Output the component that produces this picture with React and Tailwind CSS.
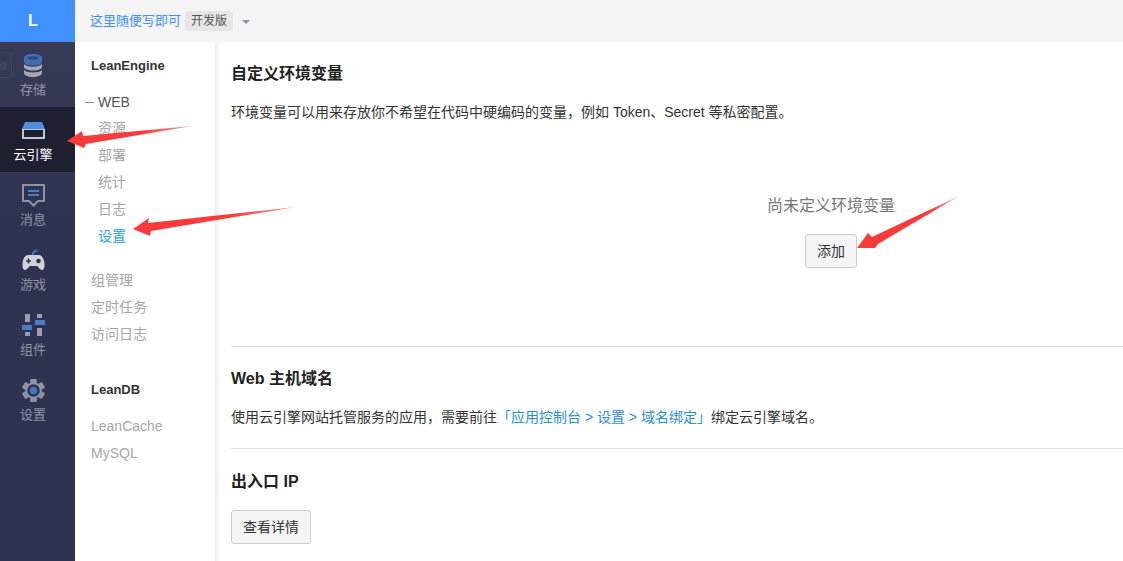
const FONT = "font-['Liberation_Sans','Noto_Sans_CJK_SC',sans-serif]";

const StorageIcon = () => (
  <svg width="18" height="23" viewBox="0 0 18 23">
    <path d="M0 4c0-2.500 4-4 9-4s9 1.500 9 4v3.500c0 2.500-4 4-9 4s-9-1.500-9-4z" fill="#3f6fb0" />
    <ellipse cx="9" cy="4" rx="5.500" ry="1.800" fill="#2a4a80" />
    <path d="M0 10c2 1.800 5 2.800 9 2.800s7-1 9-2.800v3c0 2-4 3.500-9 3.500S0 15 0 13z" fill="#a5a7b8" />
    <path d="M0 16c2 1.800 5 2.500 9 2.500s7-.7 9-2.500v3c0 2.200-4 4-9 4s-9-1.800-9-4z" fill="#a5a7b8" />
  </svg>
);

const EngineIcon = () => (
  <svg width="23" height="17" viewBox="0 0 23 17">
    <path d="M3 0h17l3 7H0z" fill="#4a90e2" />
    <path d="M0 7h23v10H0z" fill="#c4c5d2" />
    <rect x="2" y="8" width="19" height="7" fill="#1e2032" />
  </svg>
);

const MessageIcon = () => (
  <svg width="23" height="23" viewBox="0 0 23 23">
    <path d="M1 1h21v16h-6l-4.500 4.500L7 17H1z" fill="none" stroke="#8f92a6" strokeWidth="2" />
    <rect x="6" y="6" width="11" height="2" fill="#4a7dc4" />
    <rect x="6" y="10" width="11" height="2" fill="#4a7dc4" />
  </svg>
);

const GameIcon = () => (
  <svg width="23" height="22" viewBox="0 0 23 22">
    <path d="M10.500 7c0-3.500 1.500-5.500 5-5.500" fill="none" stroke="#3f78c4" strokeWidth="2" />
    <path d="M6 6h11c3 0 5 4 5.500 8.500.4 4-.8 6.500-2.500 6.500-2 0-3.500-3-5-4H8c-1.500 1-3 4-5 4-1.700 0-2.900-2.500-2.500-6.500C1 10 3 6 6 6z" fill="#d0d1da" />
    <path d="M4 12h5M6.500 9.500v5" stroke="#2f3250" strokeWidth="1.500" />
    <circle cx="16.500" cy="12" r="2.300" fill="#2f3250" />
  </svg>
);

const ComponentIcon = () => (
  <svg width="23" height="22" viewBox="0 0 23 22">
    <rect x="3" y="0" width="5" height="8" fill="#9a9cb0" />
    <rect x="15" y="0" width="5" height="4" fill="#9a9cb0" />
    <rect x="13" y="6" width="10" height="5" fill="#4a7dc4" />
    <rect x="0" y="11" width="10" height="5" fill="#4a7dc4" />
    <rect x="3" y="18" width="5" height="4" fill="#9a9cb0" />
    <rect x="15" y="14" width="5" height="8" fill="#9a9cb0" />
  </svg>
);

const GearIcon = () => (
  <svg width="23" height="23" viewBox="0 0 24 24">
    <g fill="#8f92a6">
      {[0, 60, 120].map((a) => (
        <rect key={a} x="8.500" y="0" width="7" height="24" rx="1" transform={`rotate(${a} 12 12)`} />
      ))}
    </g>
    <circle cx="12" cy="12" r="8.500" fill="#8f92a6" />
    <circle cx="12" cy="12" r="6.500" fill="#2f3250" />
    <circle cx="12" cy="12" r="3.800" fill="#3f78c4" />
  </svg>
);

const navItems = [
  { label: '存储', icon: <StorageIcon /> },
  { label: '云引擎', icon: <EngineIcon />, active: true },
  { label: '消息', icon: <MessageIcon /> },
  { label: '游戏', icon: <GameIcon /> },
  { label: '组件', icon: <ComponentIcon /> },
  { label: '设置', icon: <GearIcon /> },
];

const SubLink = ({ children, active }) => (
  <div className={`h-[27px] leading-[27px] text-sm ${active ? 'text-[#2a9df4]' : 'text-[#a6a6a6]'}`}>{children}</div>
);

// the red annotation arrows drawn on top of the screenshot
const Arrows = () => (
  <svg className="absolute left-0 top-0 pointer-events-none" width="1123" height="561" viewBox="0 0 1123 561">
    <defs>
      <linearGradient id="a1" x1="0" x2="1" y1="0" y2="0">
        <stop offset="0.6" stopColor="#f93a3a" />
        <stop offset="1" stopColor="#ff9a9a" />
      </linearGradient>
      <linearGradient id="a3" x1="0" x2="1" y1="1" y2="0">
        <stop offset="0.7" stopColor="#f93a3a" />
        <stop offset="1" stopColor="#ffb0b0" />
      </linearGradient>
    </defs>
    <path d="M67 141 L82 131 L83 136 L192 126 L86 144 L84 148 Z" fill="url(#a1)" />
    <path d="M133 229 L149 218 L148 223 L296 207 L151 231 L150 236 Z" fill="url(#a1)" />
    <path d="M857 248 L868 233 L872 237 L959 196 L878 244 L875 248 Z" fill="url(#a3)" />
  </svg>
);

export default function App() {
  return (
    <div className={`relative flex w-[1123px] h-[561px] overflow-hidden bg-white ${FONT}`}>
      {/* left icon bar */}
      <aside className="relative w-[75px] shrink-0 flex flex-col bg-gradient-to-b from-[#3a3d58] to-[#2f3250] to-40%">
        <div className="h-[42px] flex items-center justify-center pr-[9px] bg-[#4090ff] text-white font-bold text-base">L</div>
        {navItems.map((item) => (
          <div
            key={item.label}
            className={`h-[65px] flex flex-col items-center pt-[10px] pr-[9px] ${item.active ? 'bg-[#1e2032] text-white' : 'text-[#9093a3]'}`}
          >
            <div className="h-[26px] flex items-center justify-center">{item.icon}</div>
            <div className="mt-[2px] text-[13px] leading-[20px]">{item.label}</div>
          </div>
        ))}
        {/* faint leftover box in the screenshot */}
        <div className="absolute left-0 top-[52px] w-[12px] h-[26px] rounded-r-[3px] border border-l-0 border-[#3f4260]">
          <div className="mt-[9px] w-[7px] h-[8px] bg-[#3f4260]" />
        </div>
      </aside>

      <div className="flex-1 flex flex-col min-w-0">
        {/* top bar */}
        <header className="h-[42px] shrink-0 flex items-center bg-[#f4f4f4] pl-[15px]">
          <span className="text-[13px] text-[#3f8fff]">这里随便写即可</span>
          <span className="ml-[4px] h-[20px] px-[6px] leading-[20px] rounded-[4px] bg-[#e6e6e6] text-xs text-[#555]">开发版</span>
          <span className="ml-[9px] mt-[2px] w-0 h-0 border-x-[4px] border-x-transparent border-t-[4px] border-t-[#8f92a6]" />
        </header>

        <div className="flex-1 flex min-h-0">
          {/* second level menu */}
          <nav className="w-[140px] shrink-0 bg-white pl-[16px]">
            <div className="mt-[14px] h-[20px] leading-[20px] text-[13px] font-bold text-[#333]">LeanEngine</div>
            <div className="mt-[13px] h-[26px] leading-[27px] text-sm text-[#555] flex items-center -ml-[6px]">
              <span className="w-[9px] h-px bg-[#888] mr-[4px]" />WEB
            </div>
            <div className="pl-[7px]">
              <SubLink>资源</SubLink>
              <SubLink>部署</SubLink>
              <SubLink>统计</SubLink>
              <SubLink>日志</SubLink>
              <SubLink active>设置</SubLink>
            </div>
            <div className="mt-[17px]">
              <SubLink>组管理</SubLink>
              <SubLink>定时任务</SubLink>
              <SubLink>访问日志</SubLink>
            </div>
            <div className="mt-[32px] h-[20px] leading-[20px] text-[13px] font-bold text-[#333]">LeanDB</div>
            <div className="mt-[13px]">
              <SubLink>LeanCache</SubLink>
              <SubLink>MySQL</SubLink>
            </div>
          </nav>
          <div className="w-[6px] shrink-0 bg-gradient-to-r from-[#ececec] to-white" />

          {/* main content */}
          <main className="flex-1 min-w-0 pl-[10px] text-[#333]">
            <h2 className="mt-[21px] h-[22px] leading-[22px] text-base font-bold text-[#222]">自定义环境变量</h2>
            <p className="mt-[17px] h-[20px] leading-[20px] text-sm whitespace-nowrap">环境变量可以用来存放你不希望在代码中硬编码的变量，例如 Token、Secret 等私密配置。</p>

            <div className="mt-[72px] w-[1200px] h-[153px] flex flex-col items-center border-b border-[#ddd]">
              <div className="h-[24px] leading-[24px] text-base text-[#777]">尚未定义环境变量</div>
              <button className="mt-[16px] w-[52px] h-[34px] rounded-[3px] border border-[#ccc] bg-[#f5f5f5] text-sm text-[#333]">添加</button>
            </div>

            <h2 className="mt-[21px] h-[22px] leading-[22px] text-base font-bold text-[#222]">Web 主机域名</h2>
            <p className="mt-[17px] h-[20px] leading-[20px] text-sm whitespace-nowrap">
              使用云引擎网站托管服务的应用，需要前往<span className="text-[#2a8fe0]">「应用控制台 &gt; 设置 &gt; 域名绑定」</span>绑定云引擎域名。
            </p>

            <div className="mt-[21px] border-t border-[#ddd]" />
            <h2 className="mt-[22px] h-[22px] leading-[22px] text-base font-bold text-[#222]">出入口 IP</h2>
            <button className="mt-[17px] w-[80px] h-[34px] rounded-[3px] border border-[#ccc] bg-[#f5f5f5] text-sm text-[#333]">查看详情</button>
          </main>
        </div>
      </div>

      <Arrows />
    </div>
  );
}
